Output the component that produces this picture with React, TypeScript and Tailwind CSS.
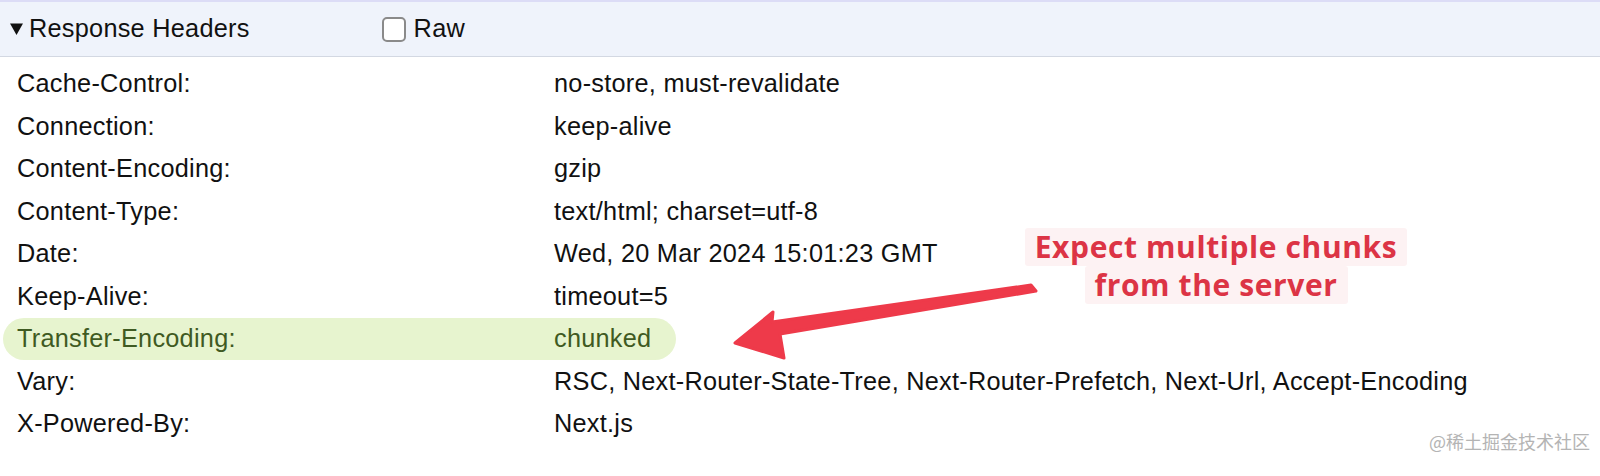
import React from "react";

const rows: [string, string, boolean?][] = [
  ["Cache-Control:", "no-store, must-revalidate"],
  ["Connection:", "keep-alive"],
  ["Content-Encoding:", "gzip"],
  ["Content-Type:", "text/html; charset=utf-8"],
  ["Date:", "Wed, 20 Mar 2024 15:01:23 GMT"],
  ["Keep-Alive:", "timeout=5"],
  ["Transfer-Encoding:", "chunked", true],
  ["Vary:", "RSC, Next-Router-State-Tree, Next-Router-Prefetch, Next-Url, Accept-Encoding"],
  ["X-Powered-By:", "Next.js"],
];

export default function App() {
  return (
    <div
      className="relative w-[1600px] h-[476px] bg-white overflow-hidden text-[#111]"
      style={{ fontFamily: '"Liberation Sans", Arial, sans-serif' }}
    >
      <div className="h-[57px] border-t-2 border-t-[#dcdcf6] border-b border-b-[#d3d8e2] bg-[#eff3fb] flex items-center text-[25.3px] tracking-[0.01em]">
        <svg className="ml-[10px]" width="13" height="12" viewBox="0 0 13 12">
          <polygon points="0,0.5 13,0.5 6.5,12" fill="#111" />
        </svg>
        <span className="ml-[6px]">Response Headers</span>
        <span className="ml-[132px] w-[24px] h-[25px] rounded-[5px] border-2 border-[#8a8a8a] bg-white"></span>
        <span className="ml-[8px]">Raw</span>
      </div>
      <div className="pt-[6px] text-[25.3px] tracking-[0.01em]">
        {rows.map(([k, v, hl]) => (
          <div key={k} className="h-[42.5px] flex items-center">
            <div
              className={
                hl
                  ? "ml-[3px] w-[673px] h-[42px] rounded-full bg-[#e7f4cf] flex items-center text-[#3f5a22]"
                  : "flex items-center w-full"
              }
            >
              <span className={hl ? "w-[551px] pl-[14px] shrink-0" : "w-[554px] pl-[17px] shrink-0"}>{k}</span>
              <span className="whitespace-nowrap">{v}</span>
            </div>
          </div>
        ))}
      </div>

      <div
        className="absolute left-[1016px] top-[228px] w-[400px] flex flex-col items-center text-[#dc3445] font-bold text-[30px] leading-[38px] tracking-[0.02em]"
        style={{ fontFamily: '"Open Sans", "Liberation Sans", sans-serif' }}
      >
        <span className="bg-[#fdf2f3] px-[10px] rounded-[3px]">Expect multiple chunks</span>
        <span className="bg-[#fdf2f3] px-[10px] rounded-[3px]">from the server</span>
      </div>

      <svg className="absolute left-0 top-0" width="1600" height="476" viewBox="0 0 1600 476">
        <polygon
          points="1031,285 1036,291 780,334 784,358 735,343 773,312 772,322"
          fill="#ee3a4a"
          stroke="#ee3a4a"
          strokeWidth="3"
          strokeLinejoin="round"
        />
      </svg>

      <div
        className="absolute left-[1429px] top-[428px] text-[18px] text-[#b4b4b4]"
        style={{ fontFamily: '"Noto Sans CJK SC", "Noto Sans", sans-serif' }}
      >
        @稀土掘金技术社区
      </div>
    </div>
  );
}
